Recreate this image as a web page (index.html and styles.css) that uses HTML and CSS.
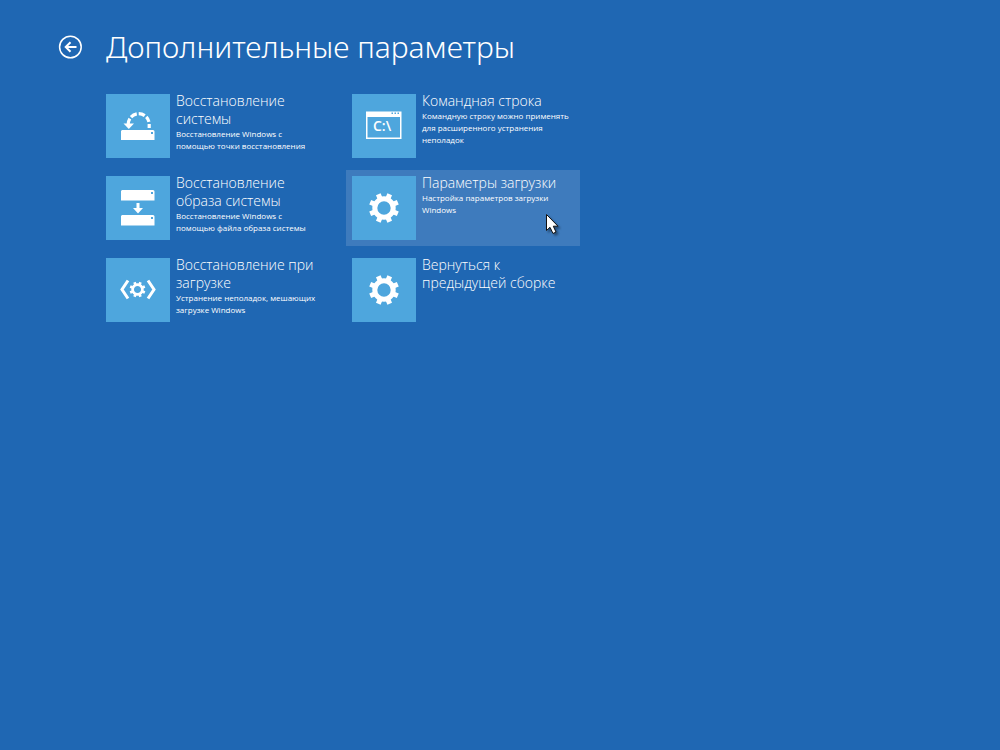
FILE: index.html
```html
<!DOCTYPE html>
<html lang="ru">
<head>
<meta charset="utf-8">
<meta name="viewport" content="width=device-width, initial-scale=1">
<title>Дополнительные параметры</title>
<link rel="stylesheet" href="styles.css">
</head>
<body>
<svg class="defs" aria-hidden="true">
  <symbol id="gear" viewBox="-16 -16 32 32">
    <circle r="9.2" fill="none" stroke="#fff" stroke-width="5"/>
    <path d="M8.3 3.44L13.8 5.7M3.44 8.3L5.7 13.8M-3.44 8.3L-5.7 13.8M-8.3 3.44L-13.8 5.7M-8.3-3.44L-13.8-5.7M-3.44-8.3L-5.7-13.8M3.44-8.3L5.7-13.8M8.3-3.44L13.8-5.7" fill="none" stroke="#fff" stroke-width="5"/>
  </symbol>
</svg>
<header class="header">
  <button class="back" type="button" aria-label="Назад">
    <svg viewBox="0 0 24 24" width="24" height="24" fill="none" stroke="#fff"><circle cx="12.400" cy="12" r="10.800" stroke-width="1.500"/><path d="M18.500 12H8M12.500 7.200L7.700 12L12.500 16.800" stroke-width="2"/></svg>
  </button>
  <h1 class="title">Дополнительные параметры</h1>
</header>
<main class="options">
  <button class="tile" type="button">
    <span class="icon"><svg viewBox="0 0 64 64" fill="#fff"><path d="M16 36h31a1.500 1.500 0 0 1 1.500 1.500V46H15V37z"/><rect x="45" y="38" width="2" height="2" fill="#4ea6dd"/><path d="M22.200 30.200A10.500 10.500 0 0 1 43.200 30.200V34" fill="none" stroke="#fff" stroke-width="3.200" stroke-dasharray="6 1.800 6.600 2 6.400 2 5.600 2.200 5"/><path d="M17.500 29.500H28L22.800 35z"/></svg></span>
    <span class="text"><span class="name">Восстановление<br>системы</span><span class="desc">Восстановление Windows с<br>помощью точки восстановления</span></span>
  </button>
  <button class="tile" type="button">
    <span class="icon"><svg viewBox="0 0 64 64" fill="#fff"><path fill-rule="evenodd" d="M14 17.500H49.500V45H14zM15.500 23V43.500H48V23z"/><path d="M39.500 18.500h1.500v1.500h-1.500zM42.500 18.500h1.500v1.500h-1.500zM45.500 18.500h1.500v1.500h-1.500z" fill="#4ea6dd"/><text class="prompt" x="21" y="37">C:\</text></svg></span>
    <span class="text"><span class="name">Командная строка</span><span class="desc">Командную строку можно применять<br>для расширенного устранения<br>неполадок</span></span>
  </button>
  <button class="tile" type="button">
    <span class="icon"><svg viewBox="0 0 64 64" fill="#fff"><path d="M16 14h31a1.500 1.500 0 0 1 1.500 1.500V24.500H15V15zM16 39h31a1.500 1.500 0 0 1 1.500 1.500V49.500H15V40z"/><path d="M45 16h2v2h-2zM45 41h2v2h-2z" fill="#4ea6dd"/><path d="M30.500 27h3v5H37l-5 5.500L27 32h3.500z"/></svg></span>
    <span class="text"><span class="name">Восстановление<br>образа системы</span><span class="desc">Восстановление Windows с<br>помощью файла образа системы</span></span>
  </button>
  <button class="tile active" type="button">
    <span class="icon"><svg viewBox="0 0 64 64"><use href="#gear" x="16" y="16" width="32" height="32"/></svg></span>
    <span class="text"><span class="name">Параметры загрузки</span><span class="desc">Настройка параметров загрузки<br>Windows</span></span>
    <svg class="cursor" viewBox="0 0 14 22" width="14" height="22" aria-hidden="true"><path d="M1.500 1.500V17.500L5 14.300L8 20.500L11 19L8.300 13.200H13z" fill="#fff" stroke="#111" stroke-width="1"/></svg>
  </button>
  <button class="tile" type="button">
    <span class="icon"><svg viewBox="0 0 64 64"><use href="#gear" x="23" y="23" width="17" height="17"/><path d="M22 22.500L16 31.500L22 40.500M42 22.500L48 31.500L42 40.500" fill="none" stroke="#fff" stroke-width="3"/></svg></span>
    <span class="text"><span class="name">Восстановление при<br>загрузке</span><span class="desc">Устранение неполадок, мешающих<br>загрузке Windows</span></span>
  </button>
  <button class="tile" type="button">
    <span class="icon"><svg viewBox="0 0 64 64"><use href="#gear" x="16" y="16" width="32" height="32"/></svg></span>
    <span class="text"><span class="name">Вернуться к<br>предыдущей сборке</span></span>
  </button>
</main>
</body>
</html>
```
FILE: styles.css
```css
* {
  box-sizing: border-box;
}

body {
  margin: 0;
  min-height: 100vh;
  padding: 24px 58px;
  background: #1f67b3;
  color: #fff;
  font-family: "Open Sans", "Noto Sans", sans-serif;
}

button {
  margin: 0;
  border: 0;
  background: none;
  color: inherit;
  font: inherit;
  text-align: left;
  cursor: default;
}

.defs {
  position: absolute;
  width: 0;
  height: 0;
}

.header {
  display: flex;
  align-items: center;
  gap: 24px;
}

.back {
  padding: 0;
}

.back svg,
.icon svg {
  display: block;
}

.title {
  margin: 0;
  font-family: "Noto Sans", "Open Sans", sans-serif;
  font-size: 30px;
  line-height: 46px;
  font-weight: 300;
}

.options {
  display: grid;
  grid-template-columns: repeat(2, minmax(0, 234px));
  gap: 6px 12px;
  padding: 18px 0 0 42px;
}

.tile {
  position: relative;
  display: flex;
  gap: 6px;
  min-height: 76px;
  padding: 6px;
}

.active {
  background: #3e7bbd;
}

.icon {
  flex: none;
  width: 64px;
  height: 64px;
  background: #4ea6dd;
}

.prompt {
  font: 600 14px "Open Sans", sans-serif;
}

.text {
  display: block;
  white-space: nowrap;
}

.name,
.desc {
  display: block;
}

.name {
  margin-top: -2px;
  font-size: 14px;
  line-height: 18px;
  font-weight: 350;
}

.desc {
  font-size: 8px;
  line-height: 12px;
}

.cursor {
  position: absolute;
  right: 21px;
  bottom: 11px;
  filter: drop-shadow(2px 2px 1px rgba(0, 0, 0, 0.4));
}
```
